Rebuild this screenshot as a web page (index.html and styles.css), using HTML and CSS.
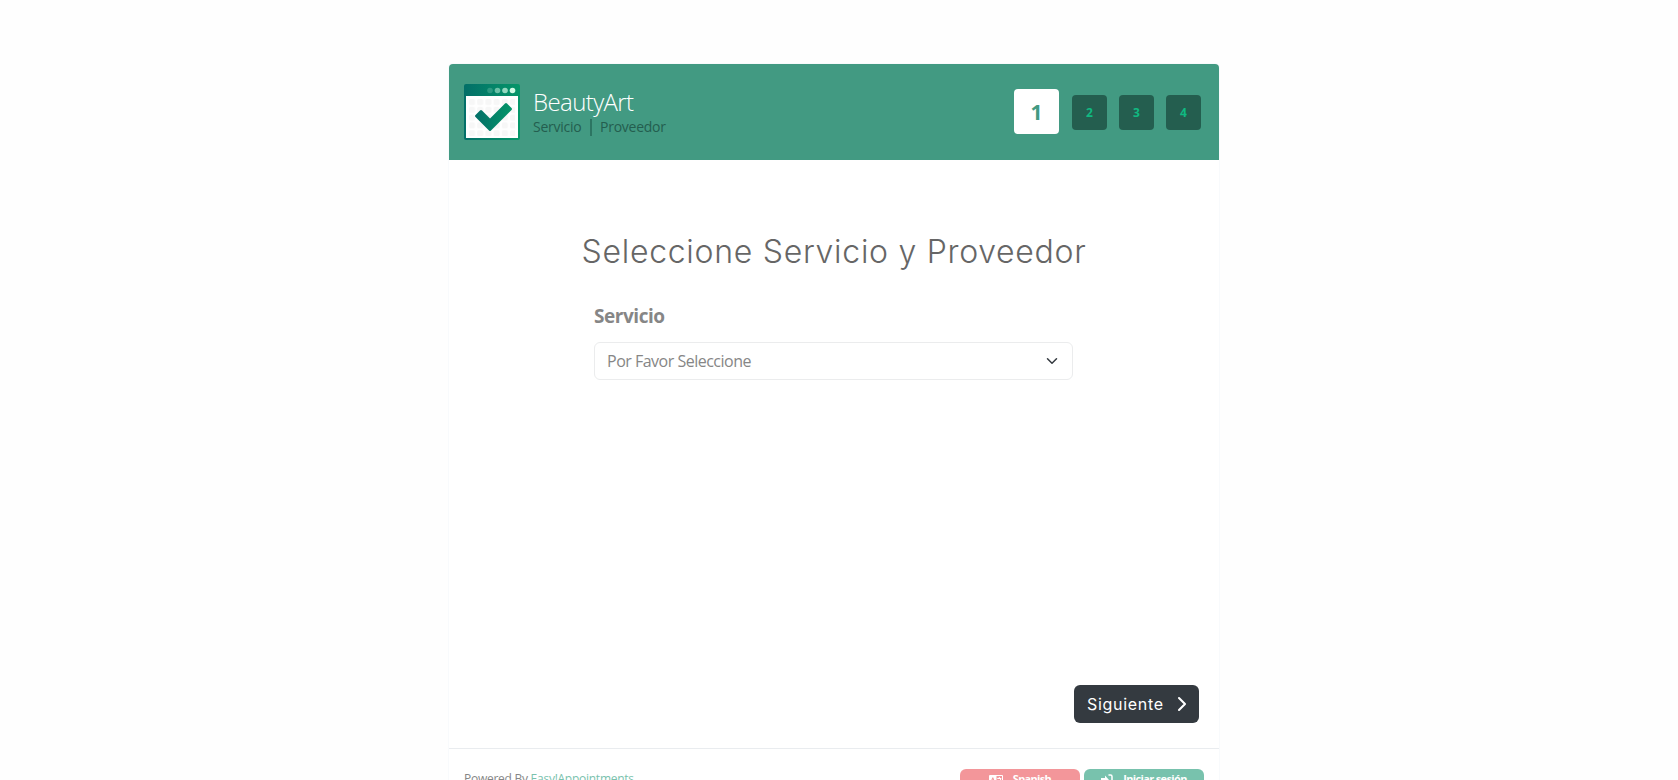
FILE: index.html
```html
<!DOCTYPE html>
<html lang="es">
<head>
<meta charset="utf-8">
<title>BeautyArt</title>
<link rel="stylesheet" href="styles.css">
</head>
<body>
<main class="wizard">
  <header class="header">
    <svg class="logo" viewBox="0 0 56 56">
      <defs>
        <linearGradient id="g" x1="0" x2="1"><stop offset="0" stop-color="#036f68"/><stop offset="1" stop-color="#059669"/></linearGradient>
        <pattern id="cells" x="5" y="15" width="8.2" height="7.8" patternUnits="userSpaceOnUse"><rect width="6" height="6" rx="1.5" fill="#f7f7f7"/></pattern>
      </defs>
      <rect width="56" height="56" rx="2" fill="url(#g)"/>
      <rect x="2" y="12" width="52" height="42" fill="#fff"/>
      <rect x="5" y="15" width="46" height="37" fill="url(#cells)"/>
      <g fill="#d1fae5"><circle cx="26" cy="6.5" r="2.800" opacity=".2"/><circle cx="33.500" cy="6.500" r="2.800" opacity=".5"/><circle cx="41" cy="6.500" r="2.800" opacity=".7"/><circle cx="48.500" cy="6.500" r="2.800"/></g>
      <path d="M11.500 31 16 26.500q1-1 2 0L26 34.500 41 19.500q1-1 2 0L47.500 24q1 1 0 2L27 46.500q-1 1-2 0L11.500 33q-1-1 0-2Z" fill="url(#g)"/>
    </svg>
    <div class="brand">
      <h1 class="company">BeautyArt</h1>
      <div class="selection"><span class="sel-service">Servicio</span><span class="sel-provider">Proveedor</span></div>
    </div>
    <div class="steps"><div class="step active">1</div><div class="step">2</div><div class="step">3</div><div class="step">4</div></div>
  </header>
  <section class="frame">
    <h2 class="title">Seleccione Servicio y Proveedor</h2>
    <div class="field">
      <div class="label">Servicio</div>
      <div class="select"><span class="value">Por Favor Seleccione</span>
        <svg class="caret" viewBox="0 0 16 16"><path d="m2 5 6 6 6-6" fill="none" stroke="#343a40" stroke-width="2" stroke-linecap="round" stroke-linejoin="round"/></svg>
      </div>
    </div>
    <div class="actions">
      <div class="next"><span class="next-text">Siguiente</span><svg class="chevron" viewBox="0 0 10 16"><path d="m2 2 6 6-6 6" fill="none" stroke="#fff" stroke-width="2.100" stroke-linecap="round" stroke-linejoin="round"/></svg></div>
    </div>
  </section>
  <footer class="footer">
    <div class="powered"><span class="by">Powered By</span> <span class="link">Easy!Appointments</span></div>
    <div class="badge language">
      <svg class="icon-lang" viewBox="0 0 14 11"><path fill="#fff" fill-rule="evenodd" d="M1 0h12q1 0 1 1v9q0 1-1 1H1q-1 0-1-1V1q0-1 1-1Zm6.500 1v9H13V1ZM3.300 2.500h1L6.300 8H5.200L4.800 7H2.700l-.4 1H1.200Zm.5 1.700L3.100 6h1.400Z"/><path d="M8.300 3.500h4M10.300 2v1.500M11.800 4q-.7 3-3.200 4M9 5q1 2.300 3.200 3" fill="none" stroke="#fff"/></svg>
      <span class="lang-text">Spanish</span>
    </div>
    <div class="badge login">
      <svg class="icon-login" viewBox="0 0 12 12"><path d="M0 4h4V1.500L8 6l-4 4.500V8H0Z" fill="#fff"/><path d="M8 1h1.500Q11 1 11 2.500v7Q11 11 9.500 11H8" fill="none" stroke="#fff" stroke-width="1.500" stroke-linecap="round"/></svg>
      <span class="login-text">Iniciar sesión</span>
    </div>
  </footer>
</main>
</body>
</html>
```
FILE: styles.css
```css
* { box-sizing: border-box; }
html { height: 100%; overflow: hidden; }
body { margin: 0; height: 100%; overflow: hidden; background: #fefefe; font-family: "Open Sans", "Noto Sans", sans-serif; color: #868686; }
.wizard { width: 770px; margin: 64px 0 0 449px; background: #fff; border-radius: 4px; box-shadow: 0 0 1px 1px #f8fafc; }
.header { display: flex; align-items: center; height: 96px; padding: 0 18px 0 15px; background: #429a82; border-radius: 4px 4px 0 0; }
.logo { width: 56px; height: 56px; flex: none; }
.brand { margin-left: 13px; padding-bottom: 1px; }
.company { margin: 0; color: #fff; font-size: 24px; line-height: 30px; font-weight: 300; letter-spacing: -0.6px; }
.selection { display: flex; align-items: center; height: 18px; margin-top: 2px; font-size: 14px; letter-spacing: -0.25px; color: #245e4f; }
.sel-service { width: 57px; height: 17px; line-height: 16px; }
.sel-provider { border-left: 2px solid #2c7562; padding-left: 8px; height: 17px; line-height: 16px; }
.steps { display: flex; align-items: center; gap: 12px; margin-left: auto; }
.step { width: 35px; height: 35px; border-radius: 4px; background: #245e4f; color: #10b981; font-size: 12px; line-height: 35px; font-weight: 700; text-align: center; }
.step.active { width: 45px; height: 45px; margin: 0 1px 1px 0; background: #fff; color: #429a82; font-size: 21px; line-height: 46px; }
.frame { height: 588px; display: flex; flex-direction: column; padding: 72px 20px 25px; }
.title { margin: 0; text-align: center; white-space: nowrap; font-family: Inter, "Open Sans", sans-serif; font-size: 32px; line-height: 40px; font-weight: 300; letter-spacing: 0.71px; color: #666; }
.field { width: 479px; margin: 32px 0 0 125px; }
.label { font-size: 19px; line-height: 24px; font-weight: 700; letter-spacing: -0.45px; }
.select { display: flex; align-items: center; justify-content: space-between; height: 38px; margin-top: 14px; padding: 0 14px 0 12px; border: 1px solid #ebeced; border-radius: 6px; font-size: 16px; letter-spacing: -0.5px; }
.caret { width: 12px; height: 12px; }
.actions { display: flex; justify-content: flex-end; margin-top: auto; }
.next { display: flex; align-items: center; justify-content: space-between; width: 125px; height: 38px; padding: 0 12px 1px 13px; border-radius: 6px; background: #343a40; color: #fff; font-family: Inter, "Open Sans", sans-serif; font-size: 16px; font-weight: 400; letter-spacing: 0.7px; }
.chevron { width: 10px; height: 16px; }
.footer { display: flex; height: 64px; padding: 20px 15px 0; border-top: 1px solid #e9ecef; font-size: 12px; line-height: 20px; letter-spacing: -0.26px; }
.powered { margin-right: auto; white-space: nowrap; }
.link { color: #79c2ad; }
.badge { display: flex; justify-content: center; gap: 10px; width: 120px; height: 24px; border-radius: 6px; color: #fff; font-size: 11px; line-height: 20px; font-weight: 700; letter-spacing: -0.65px; }
.language { background: #f3969a; margin-right: 4px; }
.login { background: #78c2ad; }
.icon-lang { width: 14px; height: 11px; margin-top: 6px; }
.icon-login { width: 12px; height: 12px; margin-top: 5px; }
```
